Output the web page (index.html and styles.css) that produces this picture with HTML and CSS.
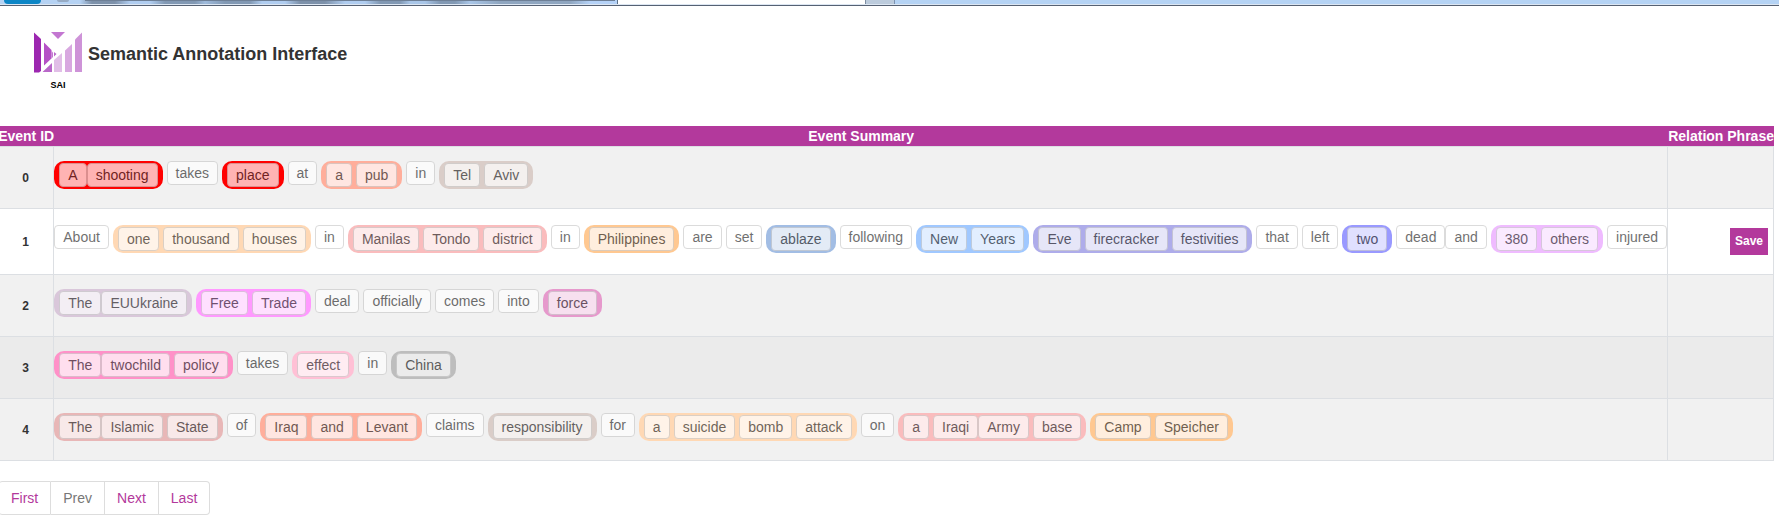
FILE: index.html
```
<!DOCTYPE html>
<html lang="en">
<head>
<meta charset="utf-8">
<title>Semantic Annotation Interface</title>
<link rel="stylesheet" href="styles.css">
</head>
<body>
<div class="chrome">
  <div class="chrome-bar"><span class="chrome-orb"></span><span class="chrome-back"></span><span class="chrome-address"></span></div>
  <div class="chrome-tab"></div>
  <div class="chrome-newtab"></div>
  <div class="chrome-rest"></div>
</div>
<header class="brand">
  <div class="logo">
    <svg class="logo-mark" viewBox="0 0 48 41" aria-hidden="true">
      <path fill="#9c27b0" d="M0 0.500L7 7V39L5 40.500H0Z"/>
      <path fill="#b552c6" d="M10 10.500L17.500 18V26.500L10 33.500Z"/>
      <path fill="#c377d1" d="M17 0H31L24 7Z"/>
      <path fill="#b968c9" d="M20 20L22.500 22L20 24.500ZM8.500 40L18 31V40Z"/>
      <path fill="#c377d1" d="M17.500 19L19 20.500V25L17.500 26.500Z"/>
      <path fill="#e1bee7" d="M20 28L28 21V40H20Z"/>
      <path fill="#d8a8e0" d="M31 18.500L38 12V40H31Z"/>
      <path fill="#ce93d8" d="M41 7.500L48 0.500V40H41Z"/>
    </svg>
    <span class="logo-name">SAI</span>
  </div>
  <h1 class="title">Semantic Annotation Interface</h1>
</header>
<main class="content">
  <table class="events">
    <thead>
      <tr><th class="col-id" scope="col">Event ID</th><th scope="col">Event Summary</th><th class="col-relation" scope="col">Relation Phrase</th></tr>
    </thead>
    <tbody>
      <tr>
        <th scope="row">0</th>
        <td class="summary"><div class="words">
          <span class="group red"><span class="word">A</span><span class="word tight">shooting</span></span>
          <span class="word">takes</span>
          <span class="group red"><span class="word">place</span></span>
          <span class="word">at</span>
          <span class="group salmon"><span class="word">a</span><span class="word">pub</span></span>
          <span class="word">in</span>
          <span class="group taupe"><span class="word">Tel</span><span class="word">Aviv</span></span>
        </div></td>
        <td></td>
      </tr>
      <tr class="active">
        <th scope="row">1</th>
        <td class="summary"><div class="words">
          <span class="word">About</span>
          <span class="group peach"><span class="word">one</span><span class="word">thousand</span><span class="word">houses</span></span>
          <span class="word">in</span>
          <span class="group rose"><span class="word">Manilas</span><span class="word">Tondo</span><span class="word">district</span></span>
          <span class="word">in</span>
          <span class="group orange"><span class="word">Philippines</span></span>
          <span class="word">are</span>
          <span class="word">set</span>
          <span class="group steel"><span class="word">ablaze</span></span>
          <span class="word">following</span>
          <span class="group sky"><span class="word">New</span><span class="word">Years</span></span>
          <span class="group lavender"><span class="word">Eve</span><span class="word">firecracker</span><span class="word">festivities</span></span>
          <span class="word">that</span>
          <span class="word">left</span>
          <span class="group indigo"><span class="word">two</span></span>
          <span class="word">dead</span>
          <span class="word tight">and</span>
          <span class="group orchid"><span class="word">380</span><span class="word">others</span></span>
          <span class="word">injured</span>
        </div></td>
        <td class="action"><button class="save" type="button">Save</button></td>
      </tr>
      <tr>
        <th scope="row">2</th>
        <td class="summary"><div class="words">
          <span class="group thistle"><span class="word">The</span><span class="word tight">EUUkraine</span></span>
          <span class="group magenta"><span class="word">Free</span><span class="word">Trade</span></span>
          <span class="word">deal</span>
          <span class="word">officially</span>
          <span class="word">comes</span>
          <span class="word">into</span>
          <span class="group plum"><span class="word">force</span></span>
        </div></td>
        <td></td>
      </tr>
      <tr class="hovered">
        <th scope="row">3</th>
        <td class="summary"><div class="words">
          <span class="group pink"><span class="word">The</span><span class="word tight">twochild</span><span class="word">policy</span></span>
          <span class="word">takes</span>
          <span class="group blush"><span class="word">effect</span></span>
          <span class="word">in</span>
          <span class="group silver"><span class="word">China</span></span>
        </div></td>
        <td></td>
      </tr>
      <tr>
        <th scope="row">4</th>
        <td class="summary"><div class="words">
          <span class="group clay"><span class="word">The</span><span class="word tight">Islamic</span><span class="word">State</span></span>
          <span class="word">of</span>
          <span class="group salmon"><span class="word">Iraq</span><span class="word">and</span><span class="word">Levant</span></span>
          <span class="word">claims</span>
          <span class="group taupe"><span class="word">responsibility</span></span>
          <span class="word">for</span>
          <span class="group peach"><span class="word">a</span><span class="word">suicide</span><span class="word">bomb</span><span class="word">attack</span></span>
          <span class="word">on</span>
          <span class="group rose"><span class="word">a</span><span class="word">Iraqi</span><span class="word tight">Army</span><span class="word">base</span></span>
          <span class="group orange"><span class="word">Camp</span><span class="word">Speicher</span></span>
        </div></td>
        <td></td>
      </tr>
    </tbody>
  </table>
  <nav class="pager" aria-label="Pages">
    <a href="#first">First</a><a class="disabled" href="#prev" aria-disabled="true">Prev</a><a href="#next">Next</a><a href="#last">Last</a>
  </nav>
</main>
</body>
</html>
```
FILE: styles.css
```
* { box-sizing: border-box; }

body {
  margin: 0;
  background: #fff;
  color: #333;
  font: 14px/20px "Liberation Sans", Arial, sans-serif;
  overflow-x: hidden;
}

/* Bottom edge of the window frame */
.chrome {
  display: flex;
  height: 6px;
  border-bottom: 1px solid #566173;
  background: #dce6f2;
  padding-bottom: 1px;
}
.chrome-bar {
  flex: 0 0 617px;
  display: flex;
  padding-left: 4px;
  background: linear-gradient(90deg, #b5d2f3 0 80px, #7d91aa 92px 115px, #b0cdf0 130px 150px, #8299b4 165px 195px, #9fbbdc 205px, #8299b4 225px 250px, #b0cdf0 262px 285px, #7d91aa 300px 325px, #b0cdf0 345px 365px, #8299b4 380px 400px, #a9c6e8 410px 425px, #8299b4 440px 455px, #a9c6e8 470px, #8fa6c0 500px 570px, #b5d2f7 590px);
}
.chrome-orb { width: 37px; background: #0c86c6; border-radius: 0 0 12px 12px; }
.chrome-back { width: 12px; height: 2px; margin: 0 16px; background: #96abc4; border-radius: 0 0 6px 6px; }
.chrome-address { flex: 1; margin-right: 2px; border-top: 1px solid #6d7f96; }
.chrome-tab { flex: 0 0 249px; background: #fff; border-left: 1px solid #5d7187; border-right: 1px solid #7d8ea2; }
.chrome-newtab { flex: 0 0 29px; background: #bccbdc; border-right: 1px solid #7d93b0; }
.chrome-rest { flex: 1; background: #b5d3f4; }

.brand {
  display: flex;
  align-items: flex-start;
  gap: 6px;
  padding: 26px 34px 34px;
}
.logo { display: flex; flex-direction: column; align-items: center; gap: 6px; }
.logo-mark { width: 48px; height: 41px; }
.logo-name { color: #000; font-size: 9px; font-weight: bold; line-height: 13px; }
.title { margin: 12px 0 0; font-size: 18px; line-height: 20px; font-weight: bold; }

.content { margin: 0 5px 0 -2px; }

.events { width: 100%; border-collapse: separate; border-spacing: 0; }
.events thead th {
  padding: 0;
  border-bottom: 1px solid #dcdfe3;
  background: #b3399c;
  background-clip: padding-box;
  color: #fff;
  line-height: 20px;
  white-space: nowrap;
}
.col-id { width: 57px; }
.col-relation { width: 106px; }
.events tbody th { font-size: 12px; text-align: center; }
.events tbody th,
.events tbody td {
  padding: 0;
  border-right: 1px solid #dcdfe3;
  border-bottom: 1px solid #dcdfe3;
  background: #f1f1f1;
  vertical-align: middle;
}
.events tbody .summary { padding: 14px 0 19px; }
.events .active th, .events .active td { background: #fff; }
.events .hovered th, .events .hovered td { background: #ebebeb; }
.events tbody .action { padding: 19px 5px; text-align: right; }

.words { display: flex; align-items: flex-start; height: 28px; white-space: nowrap; }
.word {
  padding: 0 8px;
  border: 1px solid #ccc;
  border-radius: 4px;
  background: #fff;
  line-height: 22px;
  opacity: 0.7;
}
.group { display: flex; padding: 2px 5px; border-radius: 10px; }
.words > * + *, .group > .word + .word { margin-left: 4px; }
.words > .tight.word, .group > .tight.word { margin-left: 0; }

.red { background: #ff0000; }
.salmon { background: #ffae9b; }
.taupe { background: #dacdc8; }
.peach { background: #ffd8b4; }
.rose { background: #fabcbd; }
.orange { background: #ffc891; }
.steel { background: #a2bde4; }
.sky { background: #a0c8ff; }
.lavender { background: #aeacea; }
.indigo { background: #9999ff; }
.orchid { background: #efbbff; }
.thistle { background: #d9c7da; }
.magenta { background: #ff99ff; }
.plum { background: #e699cc; }
.pink { background: #ff91c8; }
.blush { background: #ffc0d5; }
.silver { background: #bdbdbd; }
.clay { background: #e8b7b7; }

.save {
  display: block;
  margin-left: auto;
  padding: 0 5px;
  border: 0;
  background: #b3399c;
  color: #fff;
  font: bold 12px/27px "Liberation Sans", Arial, sans-serif;
}

.pager { display: flex; margin-top: 20px; }
.pager a {
  padding: 6px 12px;
  border: 1px solid #ddd;
  border-left-width: 0;
  color: #b3399c;
  text-decoration: none;
}
.pager a:first-child { border-left-width: 1px; border-radius: 4px 0 0 4px; }
.pager a:last-child { border-radius: 0 4px 4px 0; }
.pager .disabled { color: #777; }
```
